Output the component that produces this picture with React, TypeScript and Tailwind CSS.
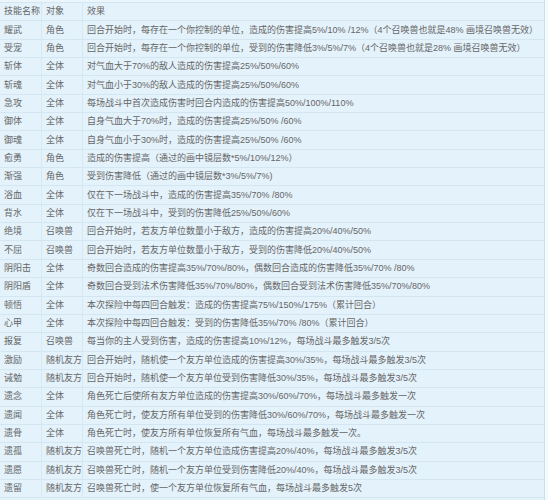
import React from "react";

const rows: [string, string, string][] = [
  ["耀武", "角色", "回合开始时，每存在一个你控制的单位，造成的伤害提高5%/10% /12%（4个召唤兽也就是48% 画境召唤兽无效）"],
  ["受宠", "角色", "回合开始时，每存在一个你控制的单位，受到的伤害降低3%/5%/7%（4个召唤兽也就是28% 画境召唤兽无效）"],
  ["斩体", "全体", "对气血大于70%的敌人造成的伤害提高25%/50%/60%"],
  ["斩魂", "全体", "对气血小于30%的敌人造成的伤害提高25%/50%/60%"],
  ["急攻", "全体", "每场战斗中首次造成伤害时回合内造成的伤害提高50%/100%/110%"],
  ["御体", "全体", "自身气血大于70%时，造成的伤害提高25%/50% /60%"],
  ["御魂", "全体", "自身气血小于30%时，造成的伤害提高25%/50% /60%"],
  ["愈勇", "角色", "造成的伤害提高（通过的画中镜层数*5%/10%/12%）"],
  ["渐强", "角色", "受到伤害降低（通过的画中镜层数*3%/5%/7%)"],
  ["浴血", "全体", "仅在下一场战斗中，造成的伤害提高35%/70% /80%"],
  ["背水", "全体", "仅在下一场战斗中，受到的伤害降低25%/50%/60%"],
  ["绝境", "召唤兽", "回合开始时，若友方单位数量小于敌方，造成的伤害提高20%/40%/50%"],
  ["不屈", "召唤兽", "回合开始时，若友方单位数量小于敌方，受到的伤害降低20%/40%/50%"],
  ["阴阳击", "全体", "奇数回合造成的伤害提高35%/70%/80%，偶数回合造成的伤害降低35%/70% /80%"],
  ["阴阳盾", "全体", "奇数回合受到法术伤害降低35%/70%/80%，偶数回合受到法术伤害降低35%/70%/80%"],
  ["顿悟", "全体", "本次探险中每四回合触发：造成的伤害提高75%/150%/175%（累计回合）"],
  ["心甲", "全体", "本次探险中每四回合触发：受到的伤害降低35%/70% /80%（累计回合）"],
  ["报复", "召唤兽", "每当你的主人受到伤害，造成的伤害提高10%/12%，每场战斗最多触发3/5次"],
  ["激励", "随机友方", "回合开始时，随机使一个友方单位造成的伤害提高30%/35%，每场战斗最多触发3/5次"],
  ["诫勉", "随机友方", "回合开始时，随机使一个友方单位受到伤害降低30%/35%，每场战斗最多触发3/5次"],
  ["遗念", "全体", "角色死亡后使所有友方单位造成的伤害提高30%/60%/70%，每场战斗最多触发一次"],
  ["遗闻", "全体", "角色死亡时，使友方所有单位受到的伤害降低30%/60%/70%，每场战斗最多触发一次"],
  ["遗骨", "全体", "角色死亡时，使友方所有单位恢复所有气血，每场战斗最多触发一次。"],
  ["遗孤", "随机友方", "召唤兽死亡时，随机一个友方单位造成伤害提高20%/40%，每场战斗最多触发3/5次"],
  ["遗愿", "随机友方", "召唤兽死亡时，随机一个友方单位受到伤害降低20%/40%，每场战斗最多触发3/5次"],
  ["遗留", "随机友方", "召唤兽死亡时，使一个友方单位恢复所有气血，每场战斗最多触发5次"],
];

function Row({ a, b, c }: { a: string; b: string; c: string }) {
  return (
    <div className="grid h-[18.35px] grid-cols-[42px_41px_1fr] border-b border-[#d3e6f1] items-stretch">
      <div className="flex items-center pl-[4px] border-r border-[#d6e8f2] whitespace-nowrap overflow-hidden">{a}</div>
      <div className="flex items-center pl-[4px] border-r border-[#d6e8f2] whitespace-nowrap overflow-hidden">{b}</div>
      <div className="flex items-center pl-[4px] whitespace-nowrap overflow-hidden">{c}</div>
    </div>
  );
}

export default function App() {
  return (
    <div
      className="w-[548px] h-[500px] overflow-hidden bg-[#f3fafe]"
      style={{ fontFamily: '"Liberation Sans", "Noto Sans CJK SC", sans-serif' }}
    >
      <div className="w-[545px] h-full bg-[#e4f2fb] border-r border-[#cde0ea] text-[9px] leading-none text-[#666666]">
        <div className="h-[3px] border-b border-[#d3e6f1] bg-[#eaf6fc]" />
        <Row a="技能名称" b="对象" c="效果" />
        {rows.map((r, i) => (
          <Row key={i} a={r[0]} b={r[1]} c={r[2]} />
        ))}
      </div>
    </div>
  );
}
